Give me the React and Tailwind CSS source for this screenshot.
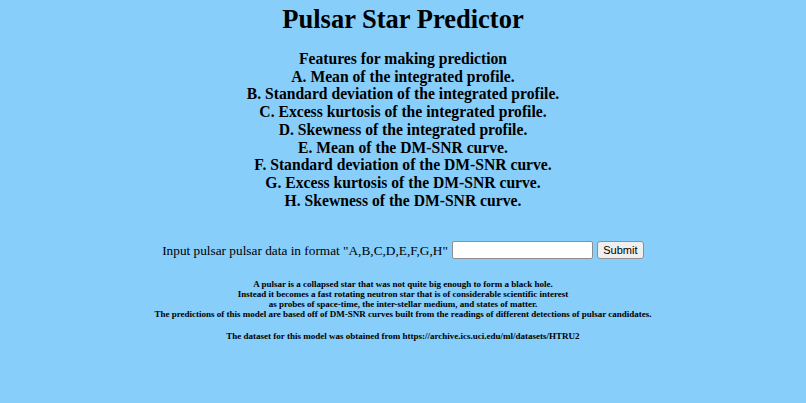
const features = [
  'A. Mean of the integrated profile.',
  'B. Standard deviation of the integrated profile.',
  'C. Excess kurtosis of the integrated profile.',
  'D. Skewness of the integrated profile.',
  'E. Mean of the DM-SNR curve.',
  'F. Standard deviation of the DM-SNR curve.',
  'G. Excess kurtosis of the DM-SNR curve.',
  'H. Skewness of the DM-SNR curve.',
];

const App = () => {
  return (
    <div
      className="min-h-[403px] bg-[#87cefa] text-black text-center pt-[4px]"
      style={{ fontFamily: '"Liberation Serif", "Times New Roman", serif' }}
    >
      <h1 className="text-[26.5px] leading-[30px] font-bold">Pulsar Star Predictor</h1>

      <div className="mt-[16px] text-[15.65px] leading-[17.7px] font-bold">
        <p>Features for making prediction</p>
        {features.map((f) => (
          <p key={f}>{f}</p>
        ))}
      </div>

      <form
        className="mt-[31.8px] flex items-center justify-center h-[18px]"
        onSubmit={(e) => e.preventDefault()}
      >
        <label className="text-[13.3px] leading-[15px]">
          Input pulsar pulsar data in format "A,B,C,D,E,F,G,H"
        </label>
        <input
          type="text"
          className="ml-[4px] w-[141px] h-[18px] bg-white border border-[#8f8f8f] rounded-[2px] px-1 text-[11px] outline-none"
        />
        <button
          type="submit"
          className="ml-[4px] w-[47px] h-[18px] bg-[#efefef] border border-[#8f8f8f] rounded-[3px] text-[11px] leading-none"
          style={{ fontFamily: '"Liberation Sans", Arial, sans-serif' }}
        >
          Submit
        </button>
      </form>

      <div className="mt-[20px] text-[9px] leading-[10.1px] font-bold">
        <p>A pulsar is a collapsed star that was not quite big enough to form a black hole.</p>
        <p>Instead it becomes a fast rotating neutron star that is of considerable scientific interest</p>
        <p>as probes of space-time, the inter-stellar medium, and states of matter.</p>
        <p>
          The predictions of this model are based off of DM-SNR curves built from the readings of
          different detections of pulsar candidates.
        </p>
        <p className="mt-[11.6px]">
          The dataset for this model was obtained from https://archive.ics.uci.edu/ml/datasets/HTRU2
        </p>
      </div>
    </div>
  );
};

export default App;
